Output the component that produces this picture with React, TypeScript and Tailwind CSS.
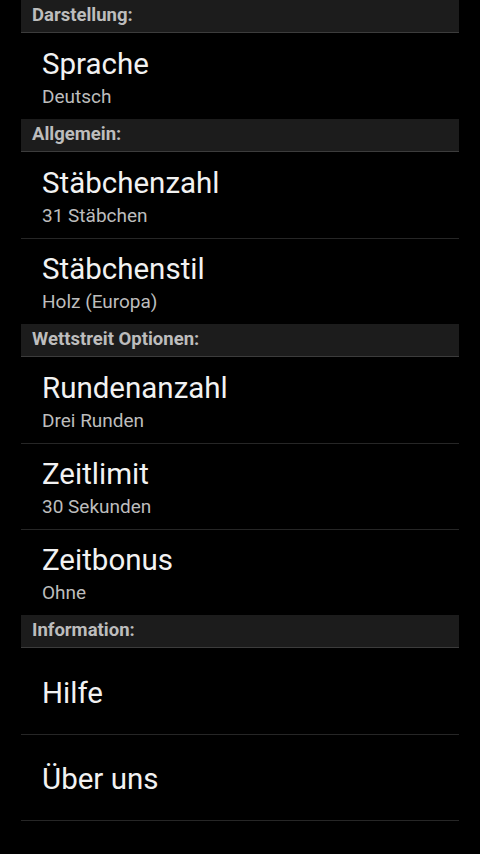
import React from 'react'

type Item = { title: string; summary?: string }
type Section = { header: string; items: Item[] }

const sections: Section[] = [
    { header: 'Darstellung:', items: [{ title: 'Sprache', summary: 'Deutsch' }] },
    {
        header: 'Allgemein:',
        items: [
            { title: 'Stäbchenzahl', summary: '31 Stäbchen' },
            { title: 'Stäbchenstil', summary: 'Holz (Europa)' },
        ],
    },
    {
        header: 'Wettstreit Optionen:',
        items: [
            { title: 'Rundenanzahl', summary: 'Drei Runden' },
            { title: 'Zeitlimit', summary: '30 Sekunden' },
            { title: 'Zeitbonus', summary: 'Ohne' },
        ],
    },
    {
        header: 'Information:',
        items: [{ title: 'Hilfe' }, { title: 'Über uns' }],
    },
]

export default function App() {
    return (
        <main
            className="min-h-screen w-full bg-black px-[21px]"
            style={{ fontFamily: 'Roboto, "Noto Sans", sans-serif' }}
        >
            {sections.map((section, si) => (
                <div key={section.header}>
                    <div className="flex h-[33px] items-center border-b border-[#3c3c3c] bg-[#1c1c1c] px-[11px]">
                        <span className="text-[18.5px] font-bold text-[#bdbdbd]">{section.header}</span>
                    </div>
                    {section.items.map((item, i) => (
                        <div
                            key={item.title}
                            className={
                                'flex h-[86px] flex-col justify-center px-[21px] pt-[3px] ' +
                                (i > 0 ? 'border-t border-[#262626]' : '')
                            }
                        >
                            <span className="text-[29.5px] leading-[34px] text-[#f2f2f2]">{item.title}</span>
                            {item.summary && (
                                <span className="mt-[4px] text-[19px] leading-[24px] text-[#bdbdbd]">
                                    {item.summary}
                                </span>
                            )}
                        </div>
                    ))}
                    {si === sections.length - 1 && <div className="h-px bg-[#262626]" />}
                </div>
            ))}
        </main>
    )
}
